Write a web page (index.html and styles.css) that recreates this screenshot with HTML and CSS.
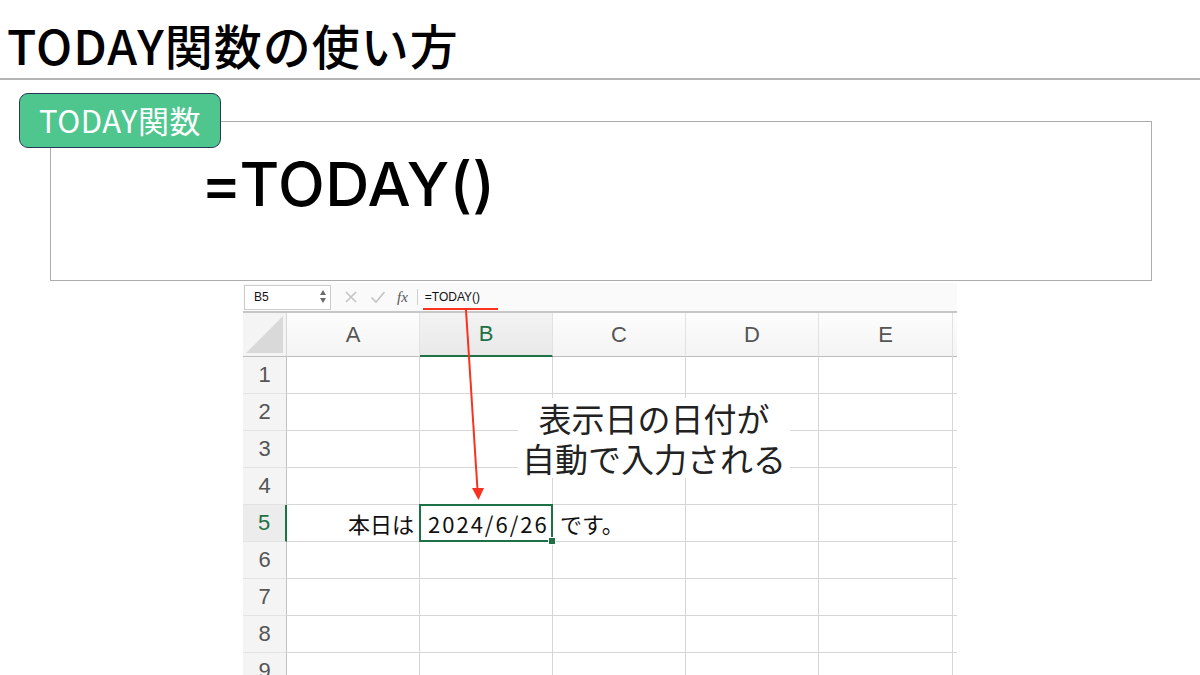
FILE: index.html
```html
<!DOCTYPE html>
<html lang="ja">
<head>
  <meta charset="UTF-8" />
  <title>TODAY関数の使い方</title>
  <link rel="stylesheet" href="styles.css">
</head>
<body>

  <h1 class="page-title">TODAY関数の使い方</h1>

  <section class="syntax">
    <div class="syntax-label">TODAY関数</div>
    <p class="syntax-formula">=TODAY()</p>
  </section>

  <div class="sheet">
    <div class="formula-bar">
      <div class="name-box">
        B5
        <span class="spin"><i class="up"></i><i class="down"></i></span>
      </div>
      <svg class="fb-icon" width="14" height="14" viewBox="0 0 14 14"><path d="M2 2 L12 12 M12 2 L2 12" stroke="#c4c4c4" stroke-width="1.6" fill="none"/></svg>
      <svg class="fb-icon" width="16" height="14" viewBox="0 0 16 14"><path d="M1.5 7.5 L6 12 L14.5 2" stroke="#c4c4c4" stroke-width="1.6" fill="none"/></svg>
      <span class="fx">fx</span>
      <span class="fb-sep"></span>
      <span class="fb-text">=TODAY()</span>
    </div>

    <div class="grid">
      <div class="hd corner"></div>
      <div class="hd col">A</div>
      <div class="hd col active">B</div>
      <div class="hd col">C</div>
      <div class="hd col">D</div>
      <div class="hd col">E</div>
      <div class="hd col rest"></div>

      <div class="hd row">1</div><div class="c"></div><div class="c"></div><div class="c"></div><div class="c"></div><div class="c"></div><div class="c rest"></div>
      <div class="hd row">2</div><div class="c"></div><div class="c"></div><div class="c"></div><div class="c"></div><div class="c"></div><div class="c rest"></div>
      <div class="hd row">3</div><div class="c"></div><div class="c"></div><div class="c"></div><div class="c"></div><div class="c"></div><div class="c rest"></div>
      <div class="hd row">4</div><div class="c"></div><div class="c"></div><div class="c"></div><div class="c"></div><div class="c"></div><div class="c rest"></div>
      <div class="hd row active">5</div>
      <div class="c right">本日は</div>
      <div class="c selected"><span class="date">2024/6/26</span></div>
      <div class="c">です。</div>
      <div class="c"></div><div class="c"></div><div class="c rest"></div>
      <div class="hd row">6</div><div class="c"></div><div class="c"></div><div class="c"></div><div class="c"></div><div class="c"></div><div class="c rest"></div>
      <div class="hd row">7</div><div class="c"></div><div class="c"></div><div class="c"></div><div class="c"></div><div class="c"></div><div class="c rest"></div>
      <div class="hd row">8</div><div class="c"></div><div class="c"></div><div class="c"></div><div class="c"></div><div class="c"></div><div class="c rest"></div>
      <div class="hd row">9</div><div class="c"></div><div class="c"></div><div class="c"></div><div class="c"></div><div class="c"></div><div class="c rest"></div>
    </div>

    <div class="callout">表示日の日付が<br>自動で入力される</div>

    <svg class="pointer" width="714" height="392" viewBox="0 0 714 392">
      <line x1="180" y1="26" x2="255" y2="26" stroke="#f8321e" stroke-width="2"/>
      <line x1="223" y1="27" x2="234.5" y2="207" stroke="#f8321e" stroke-width="2"/>
      <polygon points="229,205 241,205 235.5,217" fill="#f8321e"/>
    </svg>
  </div>

</body>
</html>
```

FILE: styles.css
```css
body {
  margin: 0;
  width: 1200px;
  height: 675px;
  overflow: hidden;
  background: #fff;
  font-family: "Noto Sans CJK JP", "Noto Sans", sans-serif;
  color: #000;
}

.page-title {
  margin: 0;
  height: 52px;
  padding: 18px 0 8px 7px;
  border-bottom: 2px solid #b4b4b4;
  font-size: 48px;
  line-height: 52px;
  font-weight: 500;
  letter-spacing: 1px;
}

.syntax {
  position: relative;
  box-sizing: border-box;
  width: 1102px;
  height: 160px;
  margin: 41px 0 0 50px;
  border: 1px solid #acacac;
}

.syntax-label {
  position: absolute;
  left: -32px;
  top: -29px;
  box-sizing: border-box;
  width: 202px;
  height: 55px;
  background: #50c68f;
  border: 1px solid #27395a;
  border-radius: 9px;
  color: #fff;
  font-size: 31px;
  line-height: 51px;
  font-weight: 400;
  text-align: center;
  letter-spacing: 0.5px;
}

.syntax-formula {
  margin: 27px 0 0 150px;
  font-family: Inter, "Noto Sans CJK JP", sans-serif;
  font-size: 61px;
  line-height: 70px;
  font-weight: 500;
  letter-spacing: 0.5px;
}

/* excel screenshot */
.sheet {
  position: relative;
  width: 714px;
  height: 392px;
  margin: 2px 0 0 243px;
  overflow: hidden;
  background: #fff;
}

.formula-bar {
  display: flex;
  align-items: center;
  height: 28px;
  background: #fafafa;
  border-bottom: 2px solid #c6c6c6;
  font-family: "Liberation Sans", sans-serif;
}

.name-box {
  position: relative;
  box-sizing: border-box;
  width: 87px;
  height: 25px;
  margin-left: 1px;
  padding-left: 9px;
  background: #fff;
  border: 1px solid #cbcbcb;
  font-size: 12px;
  line-height: 23px;
  color: #111;
}

.spin {
  position: absolute;
  right: 4px;
  top: 4px;
  display: flex;
  flex-direction: column;
  gap: 3px;
}

.spin i {
  width: 0;
  height: 0;
  border-left: 3.5px solid transparent;
  border-right: 3.5px solid transparent;
}

.spin .up {
  border-bottom: 5px solid #6a6a6a;
}

.spin .down {
  border-top: 5px solid #6a6a6a;
}

.fb-icon {
  margin-left: 12px;
}

.fb-icon:first-of-type {
  margin-left: 13px;
}

.fx {
  margin-left: 11px;
  font-family: "Liberation Serif", serif;
  font-style: italic;
  font-size: 15px;
  color: #555;
}

.fb-sep {
  width: 1px;
  height: 16px;
  margin-left: 9px;
  background: #d0d0d0;
}

.fb-text {
  margin-left: 7px;
  font-size: 12px;
  color: #111;
}

.grid {
  display: grid;
  grid-template-columns: 44px repeat(4, 133px) 134px 1fr;
  grid-template-rows: 44px;
  grid-auto-rows: 37px;
}

.grid > div {
  box-sizing: border-box;
  border-right: 1px solid #d6d6d6;
  border-bottom: 1px solid #d6d6d6;
}

.grid > .rest {
  border-right: none;
}

.hd {
  display: flex;
  align-items: center;
  justify-content: center;
  font-family: "Liberation Sans", sans-serif;
  font-size: 22px;
  color: #555;
}

.hd.col {
  background: linear-gradient(#fdfdfd, #f4f4f4);
  border-right-color: #e2e2e2;
  border-bottom-color: #bdbdbd;
}

.hd.col.active {
  background: linear-gradient(#f3f3f3, #e9e9e9);
  color: #1e7145;
  border-bottom: 2px solid #1e7145;
}

.hd.corner {
  position: relative;
  background: #f4f4f4;
  border-bottom-color: #bdbdbd;
}

.hd.corner::after {
  content: "";
  position: absolute;
  right: 3px;
  bottom: 3px;
  width: 37px;
  height: 37px;
  background: #d9d9d9;
  clip-path: polygon(100% 0, 100% 100%, 0 100%);
}

.hd.row {
  background: #f4f4f4;
  border-right-color: #c4c4c4;
  border-bottom-color: #e3e3e3;
}

.hd.row.active {
  background: #ececec;
  color: #1e7145;
  border-right: 2px solid #1e7145;
}

.c {
  display: flex;
  align-items: center;
  font-size: 22px;
  color: #111;
  padding-left: 7px;
  white-space: nowrap;
}

.c.right {
  justify-content: flex-end;
  padding: 0 5px 0 0;
}

.c.selected {
  position: relative;
  padding-left: 8px;
}

.date {
  letter-spacing: 2px;
}

.c.selected::before {
  content: "";
  position: absolute;
  left: -1px;
  top: -1px;
  right: -1px;
  bottom: -1px;
  border: 2px solid #1e7145;
}

.c.selected::after {
  content: "";
  position: absolute;
  right: -4px;
  bottom: -4px;
  width: 6px;
  height: 6px;
  background: #1e7145;
  border: 1px solid #fff;
}

.callout {
  position: absolute;
  left: 275px;
  top: 115px;
  width: 272px;
  height: 80px;
  background: #fff;
  font-size: 33px;
  line-height: 40px;
  text-align: center;
  color: #222;
}

.pointer {
  position: absolute;
  left: 0;
  top: 0;
  pointer-events: none;
}
```
